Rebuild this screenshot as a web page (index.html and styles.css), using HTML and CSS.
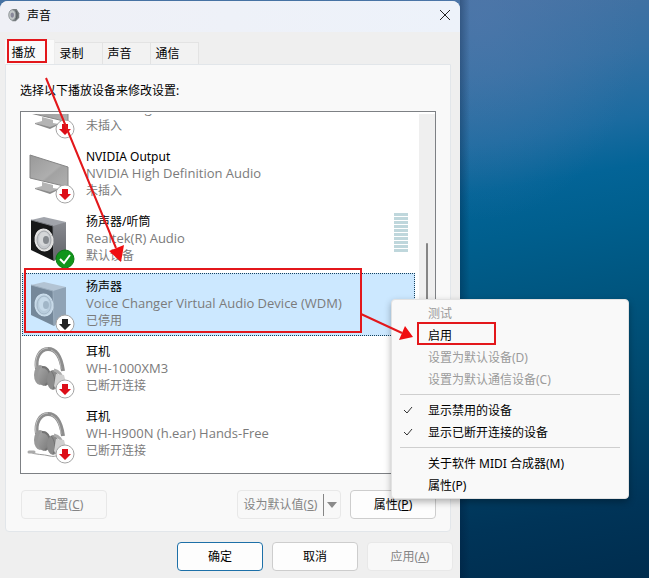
FILE: index.html
```html
<!DOCTYPE html>
<html lang="zh-CN">
<head>
<meta charset="utf-8">
<title>声音</title>
<link rel="stylesheet" href="styles.css">
</head>
<body>
<svg class="defs" aria-hidden="true">
  <defs>
    <linearGradient id="screen" x1="0" y1="0" x2="1" y2="1"><stop offset="0" stop-color="#999"/><stop offset=".55" stop-color="#aeaeae"/><stop offset=".6" stop-color="#a2a2a2"/><stop offset="1" stop-color="#b0b0b0"/></linearGradient>
    <linearGradient id="cup" x1="0" y1="0" x2="1" y2="1"><stop offset="0" stop-color="#a8a8a8"/><stop offset="1" stop-color="#777"/></linearGradient>
    <linearGradient id="side" x1="0" y1="0" x2="0" y2="1"><stop offset="0" stop-color="#888a90"/><stop offset="1" stop-color="#606268"/></linearGradient>
    <symbol id="monitor" viewBox="26 0 50 65">
      <path d="M41 39 52 42v3l6 1-9 4-15-5 7-2z" fill="#b4b4b4"/>
      <path d="m34 45 15 4 8-3v1l-8 4-15-5z" fill="#8b8b8b"/>
      <path d="m29 12 38 12v20l-38-9z" fill="url(#screen)" stroke="#858585"/>
    </symbol>
    <symbol id="speaker" viewBox="26 0 50 65">
      <path d="m30 12 13-3 22 5-13 6z" fill="#a1a4ab"/>
      <path d="m52 18 13-4v30l-12 9z" fill="url(#side)"/>
      <path d="m30 12 22 6 1 35-23-11z" fill="#171819"/>
      <path d="m30 12 22 6 1 35" fill="none" stroke="#777a80"/>
      <ellipse cx="43" cy="32" rx="9" ry="11" fill="#ddd" stroke="#eee" transform="rotate(-10 43 32)"/>
      <ellipse cx="43" cy="32" rx="7" ry="9" fill="#c5c8cc" stroke="#a5a8ac"/>
      <ellipse cx="43" cy="31" rx="5" ry="7" fill="#d5d7d9"/>
      <ellipse cx="45" cy="32" rx="3" ry="4" fill="#85898e"/>
    </symbol>
    <symbol id="speaker-off" viewBox="26 0 50 65">
      <path d="m30 12 13-3 22 5-13 6z" fill="#b3c4d4"/>
      <path d="m52 18 13-4v30l-12 9z" fill="#90a3b5"/>
      <path d="m30 12 22 6 1 35-23-11z" fill="#75889a"/>
      <path d="m30 12 22 6 1 35" fill="none" stroke="#9caebe"/>
      <ellipse cx="43" cy="32" rx="9" ry="11" fill="#c3d6e5" stroke="#d0e2f0" transform="rotate(-10 43 32)"/>
      <ellipse cx="43" cy="32" rx="7" ry="9" fill="#b9cddd" stroke="#a5b9ca"/>
      <ellipse cx="43" cy="31" rx="5" ry="7" fill="#c6dae9"/>
      <ellipse cx="45" cy="32" rx="3" ry="4" fill="#a1b6c7"/>
    </symbol>
    <symbol id="headphones" viewBox="26 0 50 65">
      <path d="M36 31C34 20 39 11 47 11s13 8 15 22" fill="none" stroke="#8d8d8d" stroke-width="4"/>
      <path d="M35 30C33 19 39 10 47 10" fill="none" stroke="#c3c3c3" stroke-width="1"/>
      <path d="M50 12c7 3 9 10 10 19" fill="none" stroke="#bbb" stroke-width="1"/>
      <ellipse cx="39" cy="37" rx="6" ry="10" fill="#999"/>
      <ellipse cx="43" cy="38" rx="6" ry="10" fill="url(#cup)"/>
      <path d="M41 29c5 0 8 4 8 9s-2 8-5 9" fill="none" stroke="#737373" stroke-width="2"/>
      <ellipse cx="52" cy="42" rx="6" ry="10" fill="#8b8b8b"/>
      <path d="M53 32c5 1 8 5 8 9" fill="none" stroke="#ababab" stroke-width="3"/>
      <path d="M50 33c4 4 5 12 2 18" fill="none" stroke="#737373"/>
      <path d="m55 36 8 1 2 8-7 9-5-6z" fill="#d0d0d0"/>
    </symbol>
    <symbol id="headset" viewBox="26 0 50 65">
      <path d="M29 49c5 3 13 2 20 4 4 1 8 0 10-3" fill="none" stroke="#999" stroke-width="1"/>
      <path d="M28 49h5" stroke="#aaa" stroke-width="3" stroke-linecap="round"/>
      <use href="#headphones" x="26" width="50" height="65"/>
    </symbol>
    <symbol id="down" viewBox="0 0 20 20">
      <circle cx="10" cy="10" r="9" fill="#fff" stroke="#a4a4a4"/>
      <path d="M7 5h6v5h3l-6 6-6-6h3z" fill="currentColor"/>
    </symbol>
    <symbol id="ok" viewBox="0 0 20 20">
      <circle cx="10" cy="10" r="9" fill="#11951b" stroke="#0a7d14"/>
      <path d="m5 10 4 4 6-8" fill="none" stroke="#fff" stroke-width="2"/>
    </symbol>
    <symbol id="check" viewBox="0 0 12 12"><path d="m2 6 3 3 5-6" fill="none" stroke="#333"/></symbol>
  </defs>
</svg>

<main class="dialog">
  <header class="titlebar">
    <svg class="app-icon" viewBox="0 0 14 16" aria-hidden="true">
      <path d="M5 1h5l3 5v5l-4 4H5z" fill="#777d80"/>
      <ellipse cx="5" cy="8" rx="4" ry="6" fill="#c2c7c7" stroke="#8a9092"/>
      <ellipse cx="5" cy="8" rx="2" ry="3" fill="#889" />
      <path d="M9 3c2 3 2 7 0 10" fill="none" stroke="#4d5254"/>
    </svg>
    <h1>声音</h1>
    <button class="close" aria-label="关闭"><svg viewBox="0 0 12 12"><path d="m1 1 10 10M11 1 1 11" stroke="#222" fill="none"/></svg></button>
  </header>

  <nav class="tabs" role="tablist">
    <button class="tab active" role="tab" aria-selected="true">播放</button>
    <button class="tab" role="tab">录制</button>
    <button class="tab" role="tab">声音</button>
    <button class="tab" role="tab">通信</button>
  </nav>

  <section class="panel">
    <p class="hint" id="hint">选择以下播放设备来修改设置:</p>
    <div class="list">
      <ul class="devices" role="listbox" aria-labelledby="hint">
        <li class="device" role="option">
          <div class="icon"><svg class="art"><use href="#monitor"/></svg><svg class="badge red"><use href="#down"/></svg></div>
          <div class="info"><span class="driver">NVIDIA High Definition Audio</span><span>未插入</span></div>
        </li>
        <li class="device" role="option">
          <div class="icon"><svg class="art"><use href="#monitor"/></svg><svg class="badge red"><use href="#down"/></svg></div>
          <div class="info"><strong>NVIDIA Output</strong><span class="driver">NVIDIA High Definition Audio</span><span>未插入</span></div>
        </li>
        <li class="device" role="option">
          <div class="icon"><svg class="art"><use href="#speaker"/></svg><svg class="badge"><use href="#ok"/></svg></div>
          <div class="info"><strong>扬声器/听筒</strong><span class="driver">Realtek(R) Audio</span><span>默认设备</span></div>
          <div class="meter"></div>
        </li>
        <li class="device selected" role="option" aria-selected="true">
          <div class="icon"><svg class="art"><use href="#speaker-off"/></svg><svg class="badge"><use href="#down"/></svg></div>
          <div class="info"><strong>扬声器</strong><span class="driver">Voice Changer Virtual Audio Device (WDM)</span><span>已停用</span></div>
        </li>
        <li class="device" role="option">
          <div class="icon"><svg class="art"><use href="#headphones"/></svg><svg class="badge red"><use href="#down"/></svg></div>
          <div class="info"><strong>耳机</strong><span class="driver">WH-1000XM3</span><span>已断开连接</span></div>
        </li>
        <li class="device" role="option">
          <div class="icon"><svg class="art"><use href="#headset"/></svg><svg class="badge red"><use href="#down"/></svg></div>
          <div class="info"><strong>耳机</strong><span class="driver">WH-H900N (h.ear) Hands-Free</span><span>已断开连接</span></div>
        </li>
      </ul>
      <div class="scrollbar"><div class="thumb"></div></div>
    </div>
    <div class="actions">
      <button class="btn" disabled>配置(<u>C</u>)</button>
      <div class="split">
        <button class="split-main" disabled>设为默认值(<u>S</u>)</button>
        <button class="split-arrow" disabled aria-label="更多"><svg viewBox="0 0 10 6"><path d="M0 0h10L5 6z" fill="#8a8a8a"/></svg></button>
      </div>
      <button class="btn">属性(<u>P</u>)</button>
    </div>
  </section>

  <footer class="footer">
    <button class="btn primary">确定</button>
    <button class="btn">取消</button>
    <button class="btn" disabled>应用(<u>A</u>)</button>
  </footer>
</main>

<div class="menu" role="menu">
  <button role="menuitem" disabled>测试</button>
  <button role="menuitem">启用</button>
  <button role="menuitem" disabled>设置为默认设备(D)</button>
  <button role="menuitem" disabled>设置为默认通信设备(C)</button>
  <hr>
  <button role="menuitemcheckbox" aria-checked="true"><svg class="tick"><use href="#check"/></svg>显示禁用的设备</button>
  <button role="menuitemcheckbox" aria-checked="true"><svg class="tick"><use href="#check"/></svg>显示已断开连接的设备</button>
  <hr>
  <button role="menuitem">关于软件 MIDI 合成器(M)</button>
  <button role="menuitem">属性(P)</button>
</div>

<svg class="marks" viewBox="0 0 649 578" aria-hidden="true">
  <g fill="none" stroke="#e3171b" stroke-width="2">
    <path d="M8 40h38v22H8zM25 269h336v63H25zM418 323h77v21h-77z"/>
    <path d="m46 78 70 170M361 314l41 19"/>
  </g>
  <path d="m121 262-12-11 15-6zM413 337l-14 3 6-14z" fill="#f00d10"/>
</svg>
</body>
</html>
```
FILE: styles.css
```css
* { box-sizing: border-box; }

body {
  margin: 0;
  min-height: 100vh;
  padding-top: 1px;
  position: relative;
  overflow: hidden;
  font: 12px/17px "Noto Sans", "Noto Sans CJK SC", sans-serif;
  color: #000;
  background:
    linear-gradient(90deg, rgba(0, 20, 50, .3), transparent 10px) 460px 0 no-repeat,
    radial-gradient(ellipse 160px 200px at 480px 20px, rgba(84, 122, 174, .5), transparent),
    linear-gradient(170deg, #4672a3 12%, #3570a3 23%, #1b6ba0 33%, #036497 40%, #005f8e 47%, #005680 57%, #00476c 72%, #003458 89%, #002d4e 100%);
}

button { font: inherit; color: inherit; margin: 0; padding: 0; border: 0; background: none; }
.defs { position: absolute; width: 0; height: 0; }

.dialog {
  display: flex;
  flex-direction: column;
  width: 100%;
  max-width: 460px;
  height: calc(100vh - 1px);
  background: #efefef;
  border-radius: 8px 8px 0 0;
  overflow: hidden;
}

.titlebar {
  display: flex;
  align-items: center;
  height: 31px;
  padding: 0 9px 3px 7px;
  background: linear-gradient(90deg, #eff0f6, #edf2fa);
}
.titlebar h1 { flex: 1; margin: 0 0 0 6px; font-size: 12px; font-weight: 400; }
.app-icon { width: 14px; height: 14px; }
.close { width: 12px; height: 12px; display: flex; }
.close svg { width: 12px; height: 12px; }

.tabs { display: flex; align-items: flex-end; height: 32px; padding: 0 5px; }
.tab {
  width: 48px;
  height: 22px;
  padding-right: 14px;
  background: #f2f2f2;
  border: solid #e3e3e3;
  border-width: 1px 1px 0 0;
}
.tab.active { width: 50px; height: 25px; padding-right: 12px; background: #fafafa; border-color: #ededed; }

.panel {
  flex: 1;
  min-height: 0;
  display: flex;
  flex-direction: column;
  margin: 0 9px 0 5px;
  padding: 17px 14px 12px;
  background: #f9f9f9;
  border: 1px solid #e2e6ea;
  border-radius: 0 0 4px 4px;
}
.hint { margin: 0 0 12px; }

.list {
  flex: 1;
  min-height: 0;
  display: flex;
  gap: 4px;
  padding-top: 2px;
  border: 1px solid #7d8084;
  background: #fff;
}
.devices {
  flex: 1;
  display: flex;
  flex-direction: column;
  justify-content: flex-end;
  margin: 0;
  padding: 0 0 5px 1px;
  list-style: none;
  overflow: hidden;
}
.device { flex: none; display: flex; height: 65px; padding-left: 5px; }
.device.selected { height: 63px; margin-bottom: 2px; background: #cce8ff; outline: 1px dotted #14415e; outline-offset: -1px; }
.icon { position: relative; width: 50px; height: 65px; margin-right: 9px; }
.art { display: block; width: 50px; height: 65px; }
.badge { position: absolute; right: 2px; top: 41px; width: 20px; height: 20px; color: #222; }
.badge.red { color: #dc0d17; }
.info {
  flex: 1;
  display: flex;
  flex-direction: column;
  justify-content: flex-end;
  height: 65px;
  padding-bottom: 9px;
  color: #7b7b7b;
  white-space: nowrap;
}
.info strong { font-weight: 400; color: #000; }
.driver { font-family: "Open Sans", sans-serif; font-size: 13px; }
.meter {
  width: 14px;
  height: 39px;
  margin: 5px 7px 0 0;
  background: repeating-linear-gradient(#bfd7dc 0 3px, #fff 3px 4px);
}
.scrollbar { width: 16px; padding-top: 129px; background: #efefef; }
.thumb { width: 2px; height: 100%; margin: 0 auto; background: #858585; border-radius: 1px; }

.actions { display: flex; align-items: center; padding: 16px 0 0 1px; }
.btn {
  width: 86px;
  height: 29px;
  background: #fdfdfd;
  border: 1px solid #cdcdcd;
  border-radius: 4px;
}
.btn:disabled, .split { background: #f8f8f8; border-color: #e8e8e8; color: #858585; }
.btn.primary { border-color: #1d70a8; }
.split { display: flex; align-items: center; width: 104px; height: 29px; margin: 0 9px 0 auto; border: 1px solid #e8e8e8; border-radius: 4px; }
.split-main { flex: 1; height: 22px; border-right: 1px solid #858585; white-space: nowrap; }
.split-arrow { width: 16px; height: 22px; display: flex; align-items: center; justify-content: center; }
.split-arrow svg { width: 10px; height: 6px; }

.footer { display: flex; justify-content: flex-end; gap: 9px; padding: 10px 7px 7px; }

.menu {
  position: absolute;
  left: 391px;
  top: 299px;
  width: 238px;
  padding: 2px 8px;
  background: #f9f9f9;
  border: 1px solid #e2e2e2;
  border-radius: 4px;
  box-shadow: 0 3px 7px rgba(0, 0, 0, .3);
}
.menu button { position: relative; display: block; width: 100%; height: 22px; padding-left: 28px; text-align: left; white-space: nowrap; }
.menu button:disabled { color: #9b9b9b; }
.menu hr { height: 1px; margin: 4px 0; border: 0; background: #cfcfcf; }
.tick { position: absolute; left: 2px; top: 5px; width: 12px; height: 12px; }

.marks { position: absolute; left: 0; top: 0; width: 649px; height: 578px; pointer-events: none; }
```
